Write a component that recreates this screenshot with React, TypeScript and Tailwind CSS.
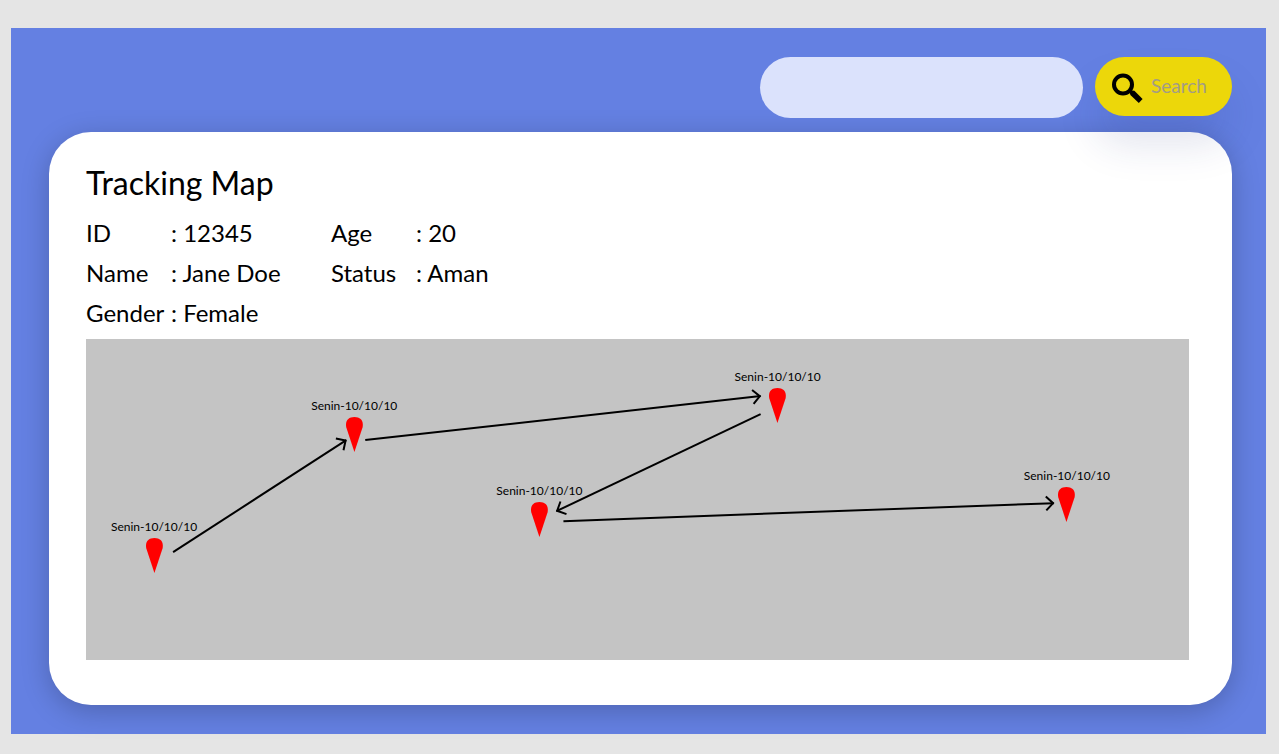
import React from "react";

type Point = { x: number; y: number };

const MAP_WIDTH = 1102;
const MAP_HEIGHT = 321;

const details: { label: string; value: string }[][] = [
  [
    { label: "ID", value: "12345" },
    { label: "Name", value: "Jane Doe" },
    { label: "Gender", value: "Female" },
  ],
  [
    { label: "Age", value: "20" },
    { label: "Status", value: "Aman" },
  ],
];

// Pin positions: centre of the pin's rounded top edge, in map units.
const stops: (Point & { label: string })[] = [
  { x: 68, y: 199, label: "Senin-10/10/10" },
  { x: 268, y: 78, label: "Senin-10/10/10" },
  { x: 691, y: 49, label: "Senin-10/10/10" },
  { x: 453, y: 163, label: "Senin-10/10/10" },
  { x: 980, y: 148, label: "Senin-10/10/10" },
];

const routes: { from: Point; to: Point }[] = [
  { from: { x: 87, y: 213 }, to: { x: 260, y: 101 } },
  { from: { x: 279, y: 101 }, to: { x: 674, y: 57 } },
  { from: { x: 674, y: 75 }, to: { x: 470, y: 172 } },
  { from: { x: 477, y: 182 }, to: { x: 967, y: 164 } },
];

function SearchIcon() {
  return (
    <svg className="h-8 w-8 shrink-0" viewBox="0 0 32 32" aria-hidden="true">
      <circle cx="12" cy="13.5" r="9" fill="none" stroke="#000" strokeWidth="4" />
      <path d="M18.5 19.5 L21.5 22.5" stroke="#000" strokeWidth="3.5" />
      <path
        d="M20.6 19.6 L23.4 19.8 L31.6 28 L27.8 32 L19.4 24.1 L19 21.2 Z"
        fill="#000"
      />
    </svg>
  );
}

function Pin() {
  return (
    <svg className="h-[35px] w-[17px]" viewBox="0 0 17 35" aria-hidden="true">
      <path
        d="M8.5 35 L0.4 10.5 C-1 4 2.2 0 8.5 0 C14.8 0 18 4 16.6 10.5 Z"
        fill="#ff0000"
      />
    </svg>
  );
}

function TrackingMap() {
  return (
    <div className="relative mt-[6px] aspect-[1102/321] w-full bg-[#c4c4c4]">
      <svg
        className="absolute inset-0 h-full w-full"
        viewBox={`0 0 ${MAP_WIDTH} ${MAP_HEIGHT}`}
        aria-hidden="true"
      >
        <defs>
          <marker
            id="arrow"
            markerUnits="userSpaceOnUse"
            markerWidth="12"
            markerHeight="18"
            viewBox="-10 -9 12 18"
            refX="0"
            refY="0"
            orient="auto"
          >
            <path d="M-7.8 -7 L-0.8 0 L-7.8 7" fill="none" stroke="#000" strokeWidth="2" />
          </marker>
        </defs>
        {routes.map(({ from, to }, i) => (
          <line
            key={i}
            x1={from.x}
            y1={from.y}
            x2={to.x}
            y2={to.y}
            stroke="#000"
            strokeWidth="2"
            markerEnd="url(#arrow)"
          />
        ))}
      </svg>
      {stops.map((stop, i) => (
        <div
          key={i}
          className="absolute flex -translate-x-1/2 flex-col items-center"
          style={{
            left: `${(stop.x / MAP_WIDTH) * 100}%`,
            top: `${((stop.y - 20) / MAP_HEIGHT) * 100}%`,
          }}
        >
          <span className="h-5 text-[12px] leading-[18px] whitespace-nowrap">{stop.label}</span>
          <Pin />
        </div>
      ))}
    </div>
  );
}

export default function App() {
  return (
    <div className="min-h-screen bg-[#e5e5e5] pt-7 pr-[13px] pb-5 pl-[11px] font-['Lato',sans-serif] text-black">
      <div className="bg-[#6480e2] pt-[29px] pr-[34px] pb-[29px] pl-[38px]">
        <form
          role="search"
          className="relative z-10 flex items-start justify-end gap-3"
          onSubmit={(e: React.FormEvent) => e.preventDefault()}
        >
          <input
            type="search"
            aria-label="Search"
            className="relative z-10 h-[61px] w-[323px] min-w-0 rounded-full bg-[#dbe2fc] px-7 text-[19px] outline-none"
          />
          <button
            type="submit"
            className="flex h-[59px] w-[137px] shrink-0 items-center gap-2 rounded-full bg-[#ecd70a] pl-4 text-[19px] text-[#a39c85] shadow-[0_28px_40px_rgba(30,50,120,0.13)]"
          >
            <SearchIcon />
            Search
          </button>
        </form>

        <main className="mt-[14px] rounded-[42px] bg-white pt-[31px] pr-[43px] pb-[45px] pl-[37px] shadow-[0_6px_28px_rgba(0,0,0,0.22)]">
          <h1 className="text-[32px] leading-[40px]">Tracking Map</h1>
          <div className="mt-[10px] flex text-[24px] leading-[40px]">
            {details.map((group, i) => (
              <dl key={i} className="w-[245px]">
                {group.map(({ label, value }) => (
                  <div key={label} className="flex">
                    <dt className="w-[85px]">{label}</dt>
                    <dd className="whitespace-nowrap">: {value}</dd>
                  </div>
                ))}
              </dl>
            ))}
          </div>
          <TrackingMap />
        </main>
      </div>
    </div>
  );
}
